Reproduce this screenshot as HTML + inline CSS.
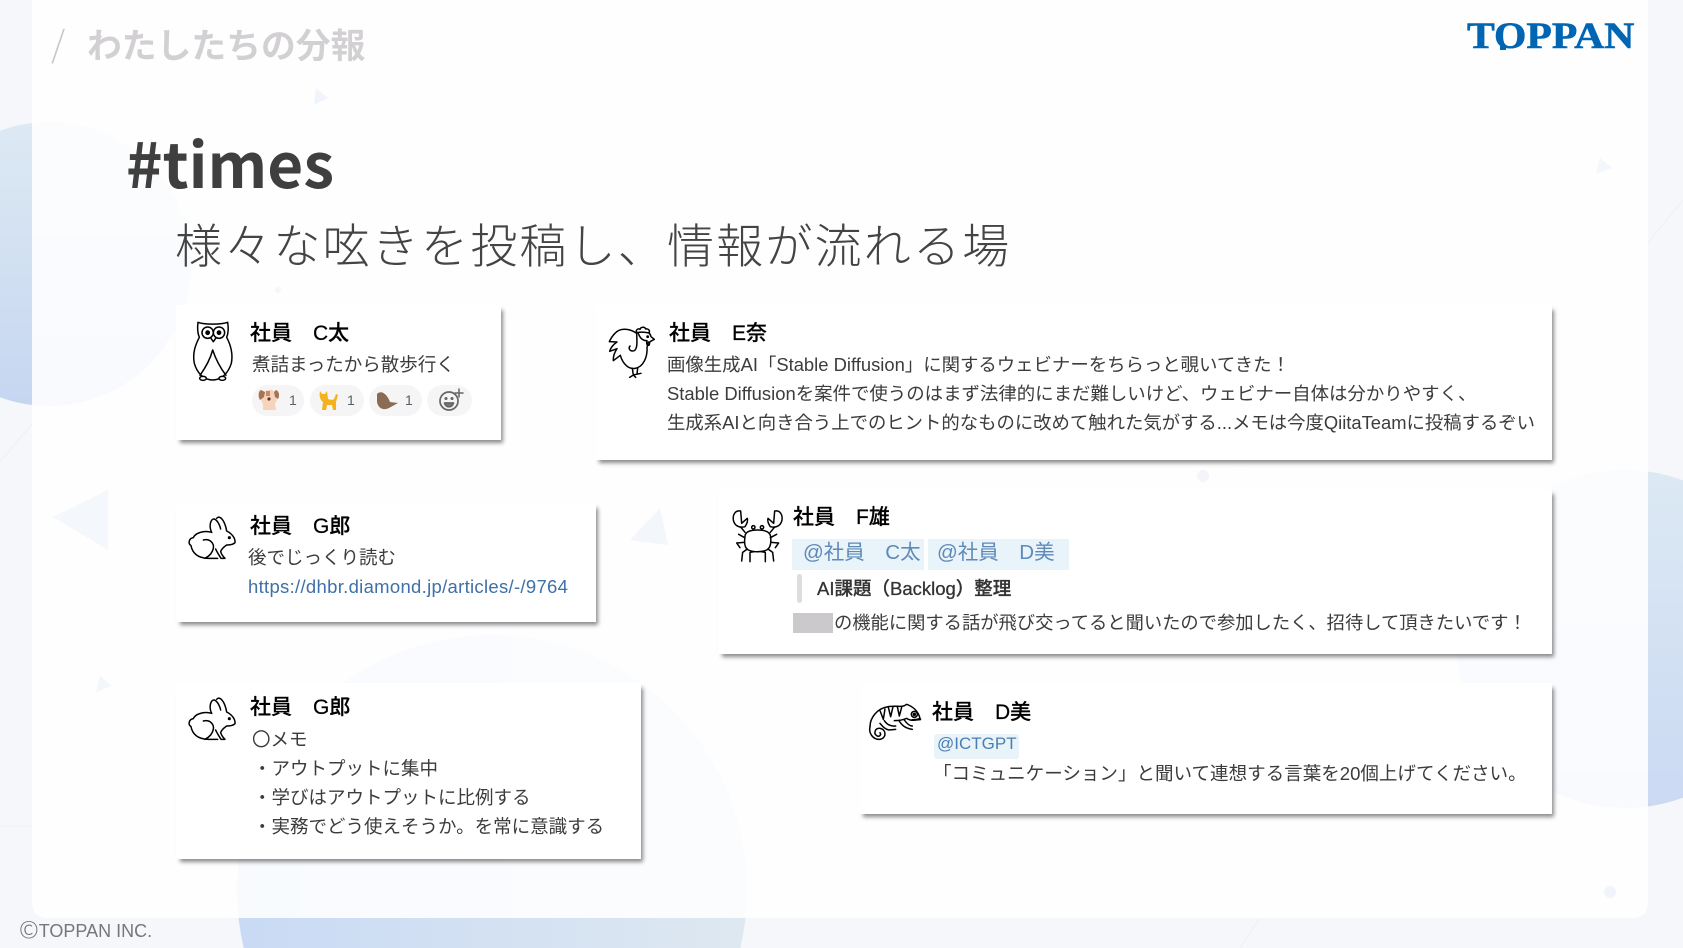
<!DOCTYPE html>
<html lang="ja"><head><meta charset="utf-8"><title>#times</title>
<style>
html,body{margin:0;padding:0}
body{width:1683px;height:948px;position:relative;overflow:hidden;background:#f5f7fa;font-family:"Liberation Sans","Noto Sans CJK JP",sans-serif;color:#3c3c3c}
.bg{position:absolute;left:0;top:0}
.panel{position:absolute;left:32px;top:0;width:1616px;height:918px;background:rgba(255,255,255,.87);border-radius:0 0 14px 14px}
.card{position:absolute;background:#fff;box-shadow:3px 4px 4px -1px rgba(0,0,0,.45)}
.t{position:absolute;white-space:nowrap;line-height:30px;font-size:18.5px;height:30px}
.n{font-size:21px;color:#000;font-weight:500;-webkit-text-stroke:.2px #000}
.pill{position:absolute;background:#f5f5f5;border-radius:16px;top:385px;height:31px}
.num{font-size:14px;color:#5c5c6c}
.m{position:absolute;background:#e8f3fa}
.mt{font-size:20.5px;color:#5f8ab8}
</style></head><body>
<svg class="bg" width="1683" height="948" viewBox="0 0 1683 948">
<defs>
<linearGradient id="a" x1="0" y1="0" x2="0" y2="1"><stop offset="0" stop-color="#dde9f3"/><stop offset="1" stop-color="#c6d6f1"/></linearGradient>
<linearGradient id="b" x1="0" y1="0" x2="1" y2="0"><stop offset="0" stop-color="#c9daf4"/><stop offset="1" stop-color="#dee8f1"/></linearGradient>
<linearGradient id="c" x1="0" y1="0" x2="0" y2="1"><stop offset="0" stop-color="#dce9f3"/><stop offset="1" stop-color="#cbd9f3"/></linearGradient>
</defs>
<path d="M0 130.7A142 142 0 1 1 0 397.3Z" fill="url(#a)"/>
<path d="M243.7 948A255 255 0 1 1 740.3 948Z" fill="url(#b)"/>
<path d="M1683 480.3A169 169 0 1 0 1683 797.7Z" fill="url(#c)"/>
<path d="M0 462L32 424M180 222L540 0M1640 252L1683 200M0 826H240M1240 948L1400 700M1200 500L1280 440" stroke="#eef0f4" stroke-width="1" fill="none"/>
</svg>
<div class="panel"></div>
<svg class="bg" width="1683" height="948" viewBox="0 0 1683 948">
<path d="M316 88L328 98L314 105Z" fill="#f0f5fb"/>
<path d="M53 517L108 490L108 550Z" fill="#f4f7fb"/>
<path d="M630 540L660 508L668 545Z" fill="#f3f6fb"/>
<path d="M1596 174L1612 168L1600 158Z" fill="#f3f6fb"/>
<path d="M96 692L112 686L100 676Z" fill="#f3f6fb"/>
<circle cx="278" cy="290" r="3" fill="#f4f7fb"/>
<circle cx="1203" cy="476" r="6" fill="#f3f5fb"/>
<circle cx="1610" cy="892" r="6" fill="#f1f4fa"/>
</svg>

<div class="t" style="left:51px;top:17px;font-size:36px;line-height:50px;height:50px;color:#c9c7c9;font-family:'Noto Sans CJK JP',sans-serif;font-weight:300">/</div>
<div class="t" style="left:87px;top:22px;font-size:34.8px;line-height:50px;height:50px;color:#d2d0d2;font-weight:700">わたしたちの分報</div>
<div class="t" style="left:1467px;top:13px;font-family:'Liberation Serif',serif;font-size:37px;line-height:48px;height:48px;font-weight:700;color:#0066b3;transform:scaleX(1.125);transform-origin:left center;-webkit-text-stroke:.6px #0066b3">TOPPAN</div>
<div style="position:absolute;left:1500px;top:46px;width:6px;height:4px;background:#0066b3"></div>
<div class="t" style="left:126px;top:121px;font-size:62px;line-height:80px;height:80px;font-family:'Noto Sans CJK JP',sans-serif;font-weight:700;color:#3f3f3f">#times</div>
<div class="t" style="left:175px;top:213px;font-size:47px;line-height:60px;height:60px;letter-spacing:2.2px;font-family:'Noto Sans CJK JP',sans-serif;font-weight:300;color:#444">様々な呟きを投稿し、情報が流れる場</div>
<div class="t" style="left:19px;top:913px;font-size:18px;color:#777"><span style="font-size:24px;font-weight:300;font-family:'Noto Sans CJK JP',sans-serif;vertical-align:-1px">©</span>TOPPAN INC.</div>

<div class="card" style="left:176px;top:305px;width:325px;height:135px"></div>
<div class="card" style="left:595px;top:305px;width:957px;height:155px"></div>
<div class="card" style="left:176px;top:503px;width:420px;height:119px"></div>
<div class="card" style="left:718px;top:489px;width:834px;height:165px"></div>
<div class="card" style="left:176px;top:683px;width:465px;height:176px"></div>
<div class="card" style="left:859px;top:683px;width:693px;height:131px"></div>

<div class="t n" style="left:250px;top:319px">社員　C太</div>
<div class="t" style="left:252px;top:350px">煮詰まったから散歩行く</div>
<div class="pill" style="left:252px;width:52px"></div>
<div class="pill" style="left:310px;width:54px"></div>
<div class="pill" style="left:369px;width:53px"></div>
<div class="pill" style="left:427px;width:45px"></div>
<div class="t num" style="left:289px;top:385px">1</div>
<div class="t num" style="left:347px;top:385px">1</div>
<div class="t num" style="left:405px;top:385px">1</div>

<div class="t n" style="left:669px;top:319px">社員　E奈</div>
<div class="t" style="left:667px;top:350px;font-size:18.4px">画像生成AI「Stable Diffusion」に関するウェビナーをちらっと覗いてきた！</div>
<div class="t" style="left:667px;top:379px;font-size:18.43px">Stable Diffusionを案件で使うのはまず法律的にまだ難しいけど、ウェビナー自体は分かりやすく、</div>
<div class="t" style="left:667px;top:408px;font-size:18.37px">生成系AIと向き合う上でのヒント的なものに改めて触れた気がする...メモは今度QiitaTeamに投稿するぞい</div>

<div class="t n" style="left:250px;top:512px">社員　G郎</div>
<div class="t" style="left:248px;top:543px">後でじっくり読む</div>
<div class="t" style="left:248px;top:572px;color:#3f70a8;letter-spacing:.3px">https://dhbr.diamond.jp/articles/-/9764</div>

<div class="t n" style="left:793px;top:503px">社員　F雄</div>
<div class="m" style="left:792px;top:539px;width:132px;height:31px"></div>
<div class="m" style="left:928px;top:539px;width:141px;height:31px"></div>
<div class="t mt" style="left:803px;top:538px">@社員　C太</div>
<div class="t mt" style="left:937px;top:538px">@社員　D美</div>
<div style="position:absolute;left:797px;top:574px;width:5px;height:29px;border-radius:3px;background:#dddddd"></div>
<div class="t" style="left:817px;top:574px;font-weight:500;color:#333;-webkit-text-stroke:.3px #333">AI課題（Backlog）整理</div>
<div style="position:absolute;left:793px;top:613px;width:40px;height:20px;background:#cbc9cb"></div>
<div class="t" style="left:834px;top:608px;font-size:18.3px">の機能に関する話が飛び交ってると聞いたので参加したく、招待して頂きたいです！</div>

<div class="t n" style="left:250px;top:693px">社員　G郎</div>
<div class="t" style="left:252px;top:725px">〇メモ</div>
<div class="t" style="left:253px;top:754px">・アウトプットに集中</div>
<div class="t" style="left:253px;top:783px">・学びはアウトプットに比例する</div>
<div class="t" style="left:253px;top:812px">・実務でどう使えそうか。を常に意識する</div>

<div class="t n" style="left:932px;top:698px">社員　D美</div>
<div style="position:absolute;left:934px;top:734px;width:85px;height:25px;background:#e8f3fa;border-radius:3px"></div>
<div class="t" style="left:937px;top:729px;color:#4a7fb0;font-size:17px">@ICTGPT</div>
<div class="t" style="left:933px;top:759px;font-size:18.55px">「コミュニケーション」と聞いて連想する言葉を20個上げてください。</div>

<svg class="bg" width="1683" height="948" viewBox="0 0 1683 948" fill="none" stroke="#000" stroke-linecap="round" stroke-linejoin="round">
<!-- owl -->
<g transform="translate(170,300) scale(.3333)" stroke-width="4.5">
<path d="M84 67C100 74 155 74 173 67C176 85 175 100 170 112C182 135 190 160 184 190C176 215 158 240 128 240C98 240 80 215 73 190C67 160 76 135 88 112C82 98 82 82 84 67Z"/>
<circle cx="113" cy="98" r="17"/><circle cx="147" cy="98" r="17"/>
<circle cx="113" cy="98" r="5" fill="#000"/><circle cx="147" cy="98" r="5" fill="#000"/>
<path d="M122 114L130 125L138 114"/>
<path d="M128 150C120 180 105 205 90 226M128 150C138 180 152 205 168 226"/>
<ellipse cx="99" cy="235" rx="10" ry="6" fill="#fff"/><ellipse cx="157" cy="235" rx="10" ry="6" fill="#fff"/>
</g>
<!-- rabbit 1 & 2 -->
<g transform="translate(175,505) scale(.3333)" stroke-width="4.5">
<path d="M110 82C100 62 108 40 118 42C128 46 135 62 137 72"/>
<path d="M125 40C135 28 150 48 155 78C170 85 182 100 180 113C175 118 165 120 155 120C148 125 140 130 137 140C140 150 150 160 150 160L138 160C132 150 125 140 122 132"/>
<path d="M110 82C85 75 60 85 55 98C42 100 38 115 48 122C52 145 70 160 100 160L128 160"/>
<path d="M85 105C105 100 118 115 115 130C112 145 100 155 90 160"/>
<circle cx="163" cy="98" r="2.5" fill="#000"/>
</g>
<g transform="translate(175,686) scale(.3333)" stroke-width="4.5">
<path d="M110 82C100 62 108 40 118 42C128 46 135 62 137 72"/>
<path d="M125 40C135 28 150 48 155 78C170 85 182 100 180 113C175 118 165 120 155 120C148 125 140 130 137 140C140 150 150 160 150 160L138 160C132 150 125 140 122 132"/>
<path d="M110 82C85 75 60 85 55 98C42 100 38 115 48 122C52 145 70 160 100 160L128 160"/>
<path d="M85 105C105 100 118 115 115 130C112 145 100 155 90 160"/>
<circle cx="163" cy="98" r="2.5" fill="#000"/>
</g>
<!-- rooster -->
<g transform="translate(595,310) scale(.3333)" stroke-width="4.5">
<path d="M125 70C100 52 72 55 60 70C52 78 47 86 43 95L66 96C54 104 47 113 44 124L66 116C58 128 54 140 55 152L76 136C84 164 102 178 120 175C145 172 158 140 156 112L160 96"/>
<path d="M125 70C126 95 128 115 118 122C105 126 99 116 105 108"/>
<path d="M125 68C121 60 129 54 135 58C138 50 150 50 152 57C160 55 166 62 162 69C150 66 135 66 125 68Z"/>
<path d="M162 69C167 73 167 77 168 80L178 88L165 95C162 100 165 106 160 106C155 106 154 98 156 92C145 92 135 85 130 70"/>
<path d="M112 175L115 195L104 202M115 195L138 190M128 175L126 192M115 195L122 202"/>
<circle cx="158" cy="80" r="2" fill="#000"/>
</g>
<!-- crab -->
<g transform="translate(720,495) scale(.3333)" stroke-width="4.5">
<path d="M62 48C45 45 38 60 40 75C43 92 58 100 75 95C80 88 84 78 82 70L65 85Z"/>
<path d="M164 48C181 45 188 60 186 75C183 92 168 100 151 95C146 88 142 78 144 70L161 85Z"/>
<path d="M75 125C75 110 90 105 113 105C136 105 150 110 152 125C154 145 150 160 140 165C125 172 100 172 85 165C75 160 72 145 75 125Z"/>
<circle cx="100" cy="97" r="5"/><circle cx="126" cy="97" r="5"/>
<path d="M75 112L62 96M151 112L164 96"/>
<path d="M74 128L56 118M72 142L50 144L60 158M82 162L68 172L65 198M102 170L90 172L90 200M151 128L170 118M154 142L176 144L166 158M144 162L158 172L161 198M124 170L136 172L136 200"/>
</g>
<!-- chameleon -->
<g transform="translate(855,690) scale(.3333)" stroke-width="4.5">
<path d="M45 110C45 85 65 55 100 50C125 45 140 55 155 43C175 50 190 65 195 85C180 92 165 92 155 85C140 92 125 92 118 92"/>
<path d="M45 110C40 130 55 150 75 148C95 145 95 118 75 115C60 114 55 130 65 137C72 142 80 135 75 128"/>
<path d="M75 62L85 88L90 57M100 52L107 80L114 50M127 50L133 78L140 52"/>
<circle cx="178" cy="73" r="9"/><circle cx="178" cy="73" r="3" fill="#000"/>
<path d="M172 90L196 88" stroke-width="6"/>
<path d="M75 100C82 108 90 118 102 120L122 118M88 92C95 102 105 110 122 108M132 92C140 105 150 115 172 118M148 90C155 100 162 108 172 108"/>
</g>
<!-- emoji -->
<g stroke="none">
<path d="M264 392C268 389 272 389 275 392L277 400L275 404L276 410H263L263 404L261 400Z" fill="#f6d3bc"/>
<path d="M261 390C258 391 258 397 260 400L264 397L265 392ZM276 390C279 391 280 396 278 399L275 397L274 392Z" fill="#a8734f"/>
<path d="M266 391L270 391L270 396L266 396Z" fill="#c98d62"/>
<circle cx="269" cy="399" r="1.6" fill="#6a3030"/>
<path d="M320 391L322 394L325 394L327 391L328 399C331 400 333 400 334 399L336 394L338 395L336 402L336 410L333 410L332 405L327 405L326 410L322 410L323 402C320 400 319 396 320 391Z" fill="#f5b21f"/>
<path d="M377 394C382 389 388 396 390 402L398 403L389 408C383 411 378 408 377 402Z" fill="#8a6c55"/>
</g>
<g stroke="#666" stroke-width="1.7">
<circle cx="449" cy="401" r="9"/>
<path d="M455 393H463M459 389V397" stroke-width="1.5"/>
<path d="M444.5 403C446 408 452 408 453.5 403Z" fill="#777"/>
<circle cx="446" cy="398.5" r=".7"/><circle cx="452" cy="398.5" r=".7"/>
</g>
</svg>
</body></html>
